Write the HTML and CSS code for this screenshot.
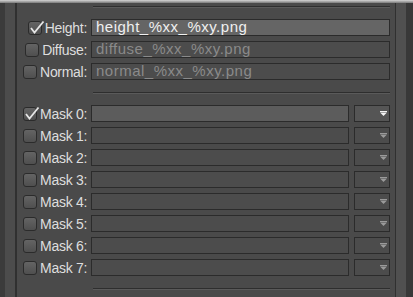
FILE: index.html
```html
<!DOCTYPE html>
<html>
<head>
    <title>Texture Paths</title>
    <link rel="stylesheet" href="styles.css">
</head>
<body>
    <div class="frame">
        <div class="edge top"></div>
        <div class="middle">
            <div class="strip-left"></div>
            <div class="panel">
                <div class="sep"></div>

                <div class="row">
                    <label class="lbl"><span class="cb"><svg class="tick" width="16" height="15" viewBox="0 0 16 15"><path d="M2 8 L5.5 12.5 L14.5 1.5" fill="none" stroke="#e6e6e6" stroke-width="1.8"/></svg></span>Height:</label>
                    <div class="field on">height_%xx_%xy.png</div>
                </div>
                <div class="row">
                    <label class="lbl"><span class="cb"></span>Diffuse:</label>
                    <div class="field">diffuse_%xx_%xy.png</div>
                </div>
                <div class="row">
                    <label class="lbl"><span class="cb"></span>Normal:</label>
                    <div class="field">normal_%xx_%xy.png</div>
                </div>

                <div class="sep"></div>

                <div class="row">
                    <label class="lbl"><span class="cb"><svg class="tick" width="16" height="15" viewBox="0 0 16 15"><path d="M2 8 L5.5 12.5 L14.5 1.5" fill="none" stroke="#e6e6e6" stroke-width="1.8"/></svg></span>Mask 0:</label>
                    <div class="field mid"></div>
                    <div class="combo on"><svg width="7" height="5" viewBox="0 0 7 5"><rect x="0" y="0" width="7" height="1"/><path d="M0 1.5 L7 1.5 L3.5 5 Z"/></svg></div>
                </div>
                <div class="row">
                    <label class="lbl"><span class="cb"></span>Mask 1:</label>
                    <div class="field"></div>
                    <div class="combo"><svg width="7" height="5" viewBox="0 0 7 5"><rect x="0" y="0" width="7" height="1"/><path d="M0 1.5 L7 1.5 L3.5 5 Z"/></svg></div>
                </div>
                <div class="row">
                    <label class="lbl"><span class="cb"></span>Mask 2:</label>
                    <div class="field"></div>
                    <div class="combo"><svg width="7" height="5" viewBox="0 0 7 5"><rect x="0" y="0" width="7" height="1"/><path d="M0 1.5 L7 1.5 L3.5 5 Z"/></svg></div>
                </div>
                <div class="row">
                    <label class="lbl"><span class="cb"></span>Mask 3:</label>
                    <div class="field"></div>
                    <div class="combo"><svg width="7" height="5" viewBox="0 0 7 5"><rect x="0" y="0" width="7" height="1"/><path d="M0 1.5 L7 1.5 L3.5 5 Z"/></svg></div>
                </div>
                <div class="row">
                    <label class="lbl"><span class="cb"></span>Mask 4:</label>
                    <div class="field"></div>
                    <div class="combo"><svg width="7" height="5" viewBox="0 0 7 5"><rect x="0" y="0" width="7" height="1"/><path d="M0 1.5 L7 1.5 L3.5 5 Z"/></svg></div>
                </div>
                <div class="row">
                    <label class="lbl"><span class="cb"></span>Mask 5:</label>
                    <div class="field"></div>
                    <div class="combo"><svg width="7" height="5" viewBox="0 0 7 5"><rect x="0" y="0" width="7" height="1"/><path d="M0 1.5 L7 1.5 L3.5 5 Z"/></svg></div>
                </div>
                <div class="row">
                    <label class="lbl"><span class="cb"></span>Mask 6:</label>
                    <div class="field"></div>
                    <div class="combo"><svg width="7" height="5" viewBox="0 0 7 5"><rect x="0" y="0" width="7" height="1"/><path d="M0 1.5 L7 1.5 L3.5 5 Z"/></svg></div>
                </div>
                <div class="row">
                    <label class="lbl"><span class="cb"></span>Mask 7:</label>
                    <div class="field"></div>
                    <div class="combo"><svg width="7" height="5" viewBox="0 0 7 5"><rect x="0" y="0" width="7" height="1"/><path d="M0 1.5 L7 1.5 L3.5 5 Z"/></svg></div>
                </div>

                <div class="sep"></div>
            </div>
            <div class="strip-right"></div>
        </div>
        <div class="edge bottom"></div>
    </div>
</body>
</html>
```

FILE: styles.css
```css
body {
    margin: 0;
    background-color: #4a4a4a;
    font-family: "Liberation Sans", Arial, sans-serif;
    font-size: 13px;
    color: #d9d9d9;
}
.frame {
    width: 413px;
    height: 297px;
    display: flex;
    flex-direction: column;
    overflow: hidden;
}
.edge {
    height: 3px;
    flex: none;
}
.edge.top {
    background: linear-gradient(#d6d6d6, #7a7a7a);
}
.edge.bottom {
    height: 5px;
    background: linear-gradient(#8a8a8a, #ececec);
}
.middle {
    flex: 1;
    display: flex;
}
.strip-left {
    width: 15px;
    background: linear-gradient(to right, #3b3b3b 0, #3b3b3b 5px, #4c4c4c 5px);
    border-right: 2px solid #303030;
}
.strip-right {
    width: 17px;
    border-left: 1px solid #303030;
    background: linear-gradient(to right, #505050 0, #505050 10px, #383838 10px);
}
.panel {
    width: 378px;
    padding-top: 3px;
    background-color: #4a4a4a;
}
.sep {
    height: 1px;
    margin: 0 5px 9px 76px;
    border-top: 1px solid #2e2e2e;
    background-color: #5a5a5a;
}
.row + .sep {
    margin-top: 9px;
}
.row {
    display: flex;
    height: 22px;
    padding-right: 5px;
    align-items: center;
}
.lbl {
    width: 70px;
    margin-right: 4px;
    display: flex;
    justify-content: flex-end;
    align-items: center;
    white-space: nowrap;
    font-size: 14px;
    letter-spacing: -0.3px;
    color: #dedede;
}
.cb {
    position: relative;
    flex: none;
    width: 12px;
    height: 12px;
    margin-right: 3px;
    border: 1px solid #2b2b2b;
    border-radius: 3px;
    background: linear-gradient(#646464, #4f4f4f);
}
.tick {
    position: absolute;
    left: 0;
    top: -2px;
}
.field {
    flex: 1;
    height: 15px;
    border: 1px solid #2b2b2b;
    background-color: #4c4c4c;
    color: #8a8a8a;
    padding-left: 4px;
    font-size: 15px;
    letter-spacing: 0.5px;
    line-height: 14px;
    margin-top: -1px;
    white-space: nowrap;
}
.field.on {
    background-color: #656565;
    color: #f0f0f0;
}
.field.mid {
    background-color: #5c5c5c;
}
.combo {
    width: 34px;
    height: 15px;
    margin-left: 5px;
    margin-top: -1px;
    border: 1px solid #2b2b2b;
    background-color: #4c4c4c;
    display: flex;
    justify-content: flex-end;
    align-items: center;
}
.combo svg {
    margin-right: 2px;
    fill: #9a9a9a;
}
.combo.on {
    background-color: #555555;
}
.combo.on svg {
    fill: #f4f4f4;
}
```
